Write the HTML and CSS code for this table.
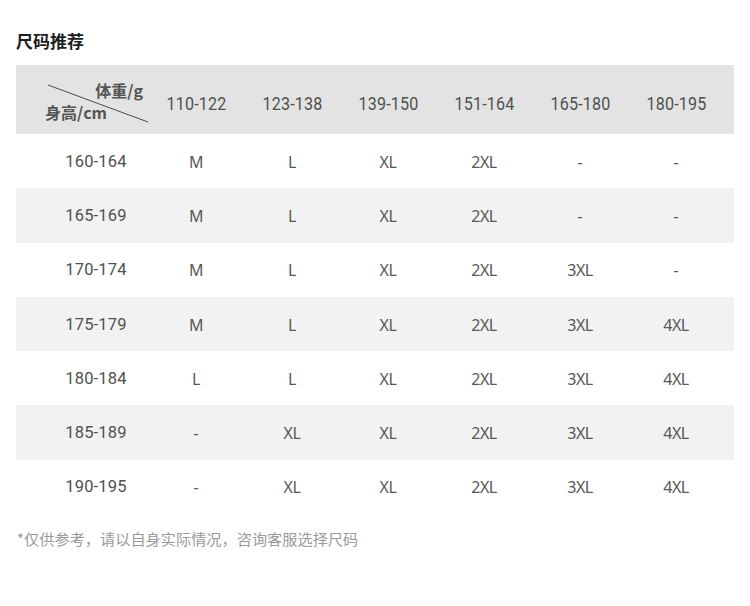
FILE: index.html
```html
<!DOCTYPE html>
<html lang="zh">
<head>
<meta charset="utf-8">
<link rel="stylesheet" href="styles.css">
</head>
<body>
<div class="page">
  <h2 class="title">尺码推荐</h2>
  <div class="table">
    <div class="row head">
      <div class="corner">
        <svg class="diag" width="132" height="69" viewBox="0 0 132 69"><line x1="32" y1="20" x2="132" y2="57" stroke="#4a4a4a" stroke-width="1"/></svg>
        <span class="w">体重/g</span>
        <span class="h">身高/cm</span>
      </div>
      <div class="num"><span>110-122</span></div><div class="num"><span>123-138</span></div><div class="num"><span>139-150</span></div><div class="num"><span>151-164</span></div><div class="num"><span>165-180</span></div><div class="num"><span>180-195</span></div>
    </div>
    <div class="row"><div class="lab">160-164</div><div>M</div><div>L</div><div>XL</div><div>2XL</div><div>-</div><div>-</div></div>
    <div class="row alt"><div class="lab">165-169</div><div>M</div><div>L</div><div>XL</div><div>2XL</div><div>-</div><div>-</div></div>
    <div class="row"><div class="lab">170-174</div><div>M</div><div>L</div><div>XL</div><div>2XL</div><div>3XL</div><div>-</div></div>
    <div class="row alt"><div class="lab">175-179</div><div>M</div><div>L</div><div>XL</div><div>2XL</div><div>3XL</div><div>4XL</div></div>
    <div class="row"><div class="lab">180-184</div><div>L</div><div>L</div><div>XL</div><div>2XL</div><div>3XL</div><div>4XL</div></div>
    <div class="row alt"><div class="lab">185-189</div><div>-</div><div>XL</div><div>XL</div><div>2XL</div><div>3XL</div><div>4XL</div></div>
    <div class="row"><div class="lab">190-195</div><div>-</div><div>XL</div><div>XL</div><div>2XL</div><div>3XL</div><div>4XL</div></div>
  </div>
  <p class="note">*仅供参考，请以自身实际情况，咨询客服选择尺码</p>
</div>
</body>
</html>
```

FILE: styles.css
```css
html, body {
  margin: 0;
  padding: 0;
  background: #ffffff;
}
.page {
  padding: 29px 16px 0 16px;
  font-family: "Noto Sans", "Noto Sans CJK SC", sans-serif;
  color: #555555;
}
.title {
  margin: 0;
  font-size: 17px;
  line-height: 24px;
  font-weight: 700;
  color: #1e1e1e;
  font-family: "Noto Sans CJK SC", sans-serif;
}
.table {
  margin-top: 12px;
  width: 718px;
}
.row {
  display: grid;
  grid-template-columns: 132px repeat(6, 96px) 10px;
  height: 54.3px;
  align-items: center;
  text-align: center;
  font-size: 16px;
  letter-spacing: -0.4px;
  font-family: "Noto Sans", "Noto Sans CJK SC", sans-serif;
  color: #575757;
}
.row > div {
  padding-top: 1px;
}
.row.alt {
  background: #f2f2f2;
}
.row.head {
  height: 69px;
  background: #e3e3e3;
}
.num, .lab {
  font-family: Roboto, "Liberation Sans", sans-serif;
  letter-spacing: 0.2px;
  color: #505050;
}
.lab {
  font-size: 16.5px;
  padding-left: 28px;
  padding-top: 0 !important;
}
.num {
  padding-top: 9px !important;
  font-size: 18.5px;
}
.num span {
  display: inline-block;
  transform: scaleX(0.87);
}
.corner {
  position: relative;
  height: 69px;
  padding: 0 !important;
}
.diag {
  position: absolute;
  left: 0;
  top: 0;
}
.corner .w, .corner .h {
  position: absolute;
  font-family: "Noto Sans CJK SC", sans-serif;
  font-weight: 700;
  font-size: 16px;
  line-height: 20px;
  letter-spacing: 0;
  color: #555555;
}
.corner .w {
  right: 5px;
  top: 15px;
}
.corner .h {
  left: 29px;
  top: 37px;
}
.note {
  margin: 12px 0 0 1px;
  font-size: 15.2px;
  line-height: 24px;
  color: #9a9a9a;
  font-family: "Noto Sans CJK SC", sans-serif;
}
```
